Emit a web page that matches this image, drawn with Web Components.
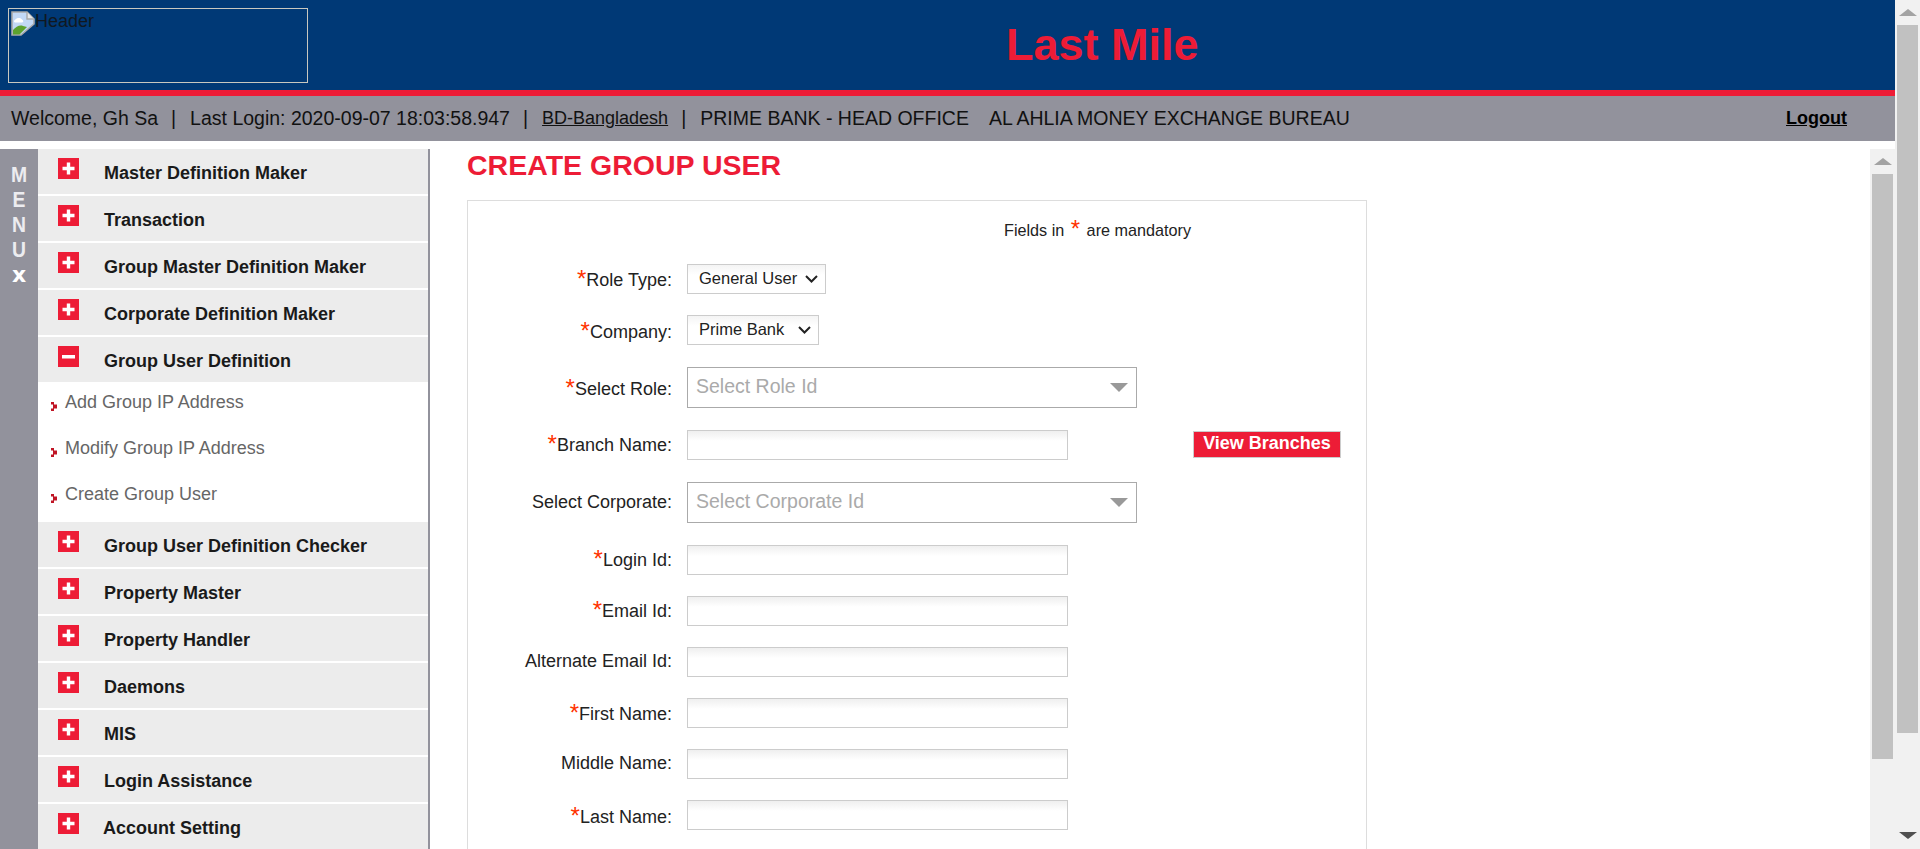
<!DOCTYPE html>
<html lang="en">
<head>
<meta charset="utf-8">
<title>Last Mile</title>
<style>
  html, body { margin: 0; height: 849px; overflow: hidden; background: #fff; }
  body { font-family: "Liberation Sans", Arial, sans-serif; color: #222; display: flex; }
</style>
</head>
<body>

<app-page>
  <app-header slot="header" title="Last Mile"></app-header>
  <status-bar slot="status"></status-bar>
  <side-menu slot="menu">
    <menu-item label="Master Definition Maker"></menu-item>
    <menu-item label="Transaction"></menu-item>
    <menu-item label="Group Master Definition Maker"></menu-item>
    <menu-item label="Corporate Definition Maker"></menu-item>
    <menu-item label="Group User Definition" open>
      <sub-item>Add Group IP Address</sub-item>
      <sub-item>Modify Group IP Address</sub-item>
      <sub-item>Create Group User</sub-item>
    </menu-item>
    <menu-item label="Group User Definition Checker"></menu-item>
    <menu-item label="Property Master"></menu-item>
    <menu-item label="Property Handler"></menu-item>
    <menu-item label="Daemons"></menu-item>
    <menu-item label="MIS"></menu-item>
    <menu-item label="Login Assistance"></menu-item>
    <menu-item label="Account Setting" tight></menu-item>
  </side-menu>
  <form-panel slot="main" heading="CREATE GROUP USER">
    <form-row label="Role Type:" required nudge="1"><native-select width="139" value="General User"></native-select></form-row>
    <form-row label="Company:" required nudge="2"><native-select width="132" value="Prime Bank"></native-select></form-row>
    <form-row label="Select Role:" required tall nudge="1"><combo-box placeholder="Select Role Id"></combo-box></form-row>
    <form-row label="Branch Name:" required><text-field></text-field><red-button>View Branches</red-button></form-row>
    <form-row label="Select Corporate:" tall nudge="-1"><combo-box placeholder="Select Corporate Id"></combo-box></form-row>
    <form-row label="Login Id:" required><text-field></text-field></form-row>
    <form-row label="Email Id:" required><text-field></text-field></form-row>
    <form-row label="Alternate Email Id:" nudge="-1"><text-field></text-field></form-row>
    <form-row label="First Name:" required nudge="1"><text-field></text-field></form-row>
    <form-row label="Middle Name:" nudge="-1"><text-field></text-field></form-row>
    <form-row label="Last Name:" required nudge="2"><text-field></text-field></form-row>
  </form-panel>
  <fake-scrollbar slot="inner" top="25" thumb="585"></fake-scrollbar>
</app-page>
<fake-scrollbar top="25" thumb="708" down></fake-scrollbar>

<script>
const RED = '#ed1c36';

// Outer page frame
class AppPage extends HTMLElement {
  constructor() {
    super();
    this.attachShadow({mode: 'open'}).innerHTML = `
    <style>
      :host { display: flex; flex-direction: column; flex: 1; min-width: 0; height: 849px; }
      .body { display: flex; flex: 1; min-height: 0; margin-top: 8px; }
      .main { flex: 1; min-width: 0; overflow: hidden; padding-left: 37px; }
    </style>
    <slot name="header"></slot>
    <slot name="status"></slot>
    <div class="body">
      <slot name="menu"></slot>
      <div class="main"><slot name="main"></slot></div>
      <slot name="inner"></slot>
    </div>`;
  }
}

class AppHeader extends HTMLElement {
  constructor() {
    super();
    this.attachShadow({mode: 'open'}).innerHTML = `
    <style>
      :host { display: flex; height: 90px; background: #003976; border-bottom: 6px solid ${RED}; box-sizing: content-box; }
      .logo { width: 298px; height: 73px; margin: 8px 0 0 8px; border: 1px solid #c8c8c0; display: flex; align-items: flex-start; color: #101820; font-size: 18px; line-height: 20px; flex: none; }
      .logo svg { margin: 2px 0 0 2px; flex: none; }
      .logo span { margin-top: 2px; }
      h1 { flex: 1; margin: 0; padding: 20px 0 0 698px; font-size: 45px; line-height: 50px; font-weight: bold; color: ${RED}; }
    </style>
    <div class="logo">
      <svg width="24" height="25" viewBox="0 0 24 25">
        <path d="M1 1h15l7 7v5L10 24H1z" fill="#c3d9f6" stroke="#a9a9a9" stroke-width="1.600"/>
        <path d="M16 1v7h7" fill="#e6e8ea" stroke="#a9a9a9" stroke-width="1.400"/>
        <path d="M4 9c2-2.500 5-2.500 7-.500 1.500 1 2 2.500 0 3H4c-1.500-.500-1.500-1.800 0-2.500z" fill="#fff"/>
        <path d="M2 23.500V19c3-3.500 7-5.500 10-4l4 1-7.500 7.500z" fill="#5da32f"/>
      </svg>
      <span>Header</span>
    </div>
    <h1>${this.getAttribute('title')}</h1>`;
  }
}

class StatusBar extends HTMLElement {
  constructor() {
    super();
    this.attachShadow({mode: 'open'}).innerHTML = `
    <style>
      :host { display: flex; align-items: center; height: 45px; background: #92929c; color: #111; font-size: 19.500px; padding-left: 11px; padding-right: 48px; white-space: nowrap; }
      .sep { margin: 0 14px 0 13px; }
      .gap { margin-left: 20px; }
      a { color: inherit; font-size: 18px; }
      .logout { margin-left: auto; font-weight: bold; font-size: 18px; color: #000; }
    </style>
    <span>Welcome, Gh Sa</span><span class="sep">|</span>
    <span>Last Login: 2020-09-07 18:03:58.947</span><span class="sep">|</span>
    <a href="#">BD-Bangladesh</a><span class="sep">|</span>
    <span>PRIME BANK - HEAD OFFICE</span>
    <span class="gap">AL AHLIA MONEY EXCHANGE BUREAU</span>
    <a class="logout" href="#">Logout</a>`;
  }
}

class SideMenu extends HTMLElement {
  constructor() {
    super();
    this.attachShadow({mode: 'open'}).innerHTML = `
    <style>
      :host { display: flex; width: 430px; flex: none; }
      .strip { width: 38px; background: #92929c; color: #ececf0; font-weight: bold; font-size: 22px; text-align: center; line-height: 25px; padding-top: 13px; box-sizing: border-box; flex: none; }
      .strip b { display: block; transform: scaleX(.88); }
      .strip .x { font-size: 22px; color: #fff; font-family: "DejaVu Sans", sans-serif; transform: none; }
      .items { flex: 1; border-right: 2px solid #92929c; overflow: hidden; }
    </style>
    <div class="strip"><b>M</b><b>E</b><b>N</b><b>U</b><b class="x">x</b></div>
    <div class="items"><slot></slot></div>`;
  }
}

class MenuItem extends HTMLElement {
  constructor() {
    super();
    const open = this.hasAttribute('open');
    const bar = open ? '<rect x="4" y="9" width="13" height="3.500" fill="#fff"/>'
                     : '<path d="M8.800 4.500h3.400v4.300h4.300v3.400h-4.300v4.300H8.800v-4.300H4.500V8.800h4.300z" fill="#fff"/>';
    this.attachShadow({mode: 'open'}).innerHTML = `
    <style>
      :host { display: block; margin-bottom: 2px; }
      :host([open]) { margin-bottom: 0; }
      .head { display: flex; height: 45px; background: #ececec; color: #1a1a1a; font-weight: bold; font-size: 18px; line-height: 48px; padding-left: 20px; }
      svg { flex: none; margin: 9px 25px 0 0; }
      :host([tight]) svg { margin-right: 24px; }
    </style>
    <div class="head">
      <svg width="21" height="21" viewBox="0 0 21 21"><rect width="21" height="21" fill="${RED}"/>${bar}</svg>
      <span>${this.getAttribute('label')}</span>
    </div>
    <slot></slot>`;
  }
}

class SubItem extends HTMLElement {
  constructor() {
    super();
    this.attachShadow({mode: 'open'}).innerHTML = `
    <style>
      :host { display: flex; height: 46px; background: #fff; color: #666; font-size: 18px; line-height: 40px; padding-left: 13px; }
      :host(:last-child) { height: 48px; }
      svg { flex: none; margin: 20px 8px 0 0; }
    </style>
    <svg width="6" height="9" viewBox="0 0 6 9"><path d="M0 0h3v2.500h3v4H3V9H0V6.500h2v-4H0z" fill="#c01525"/></svg>
    <span><slot></slot></span>`;
  }
}

class FormPanel extends HTMLElement {
  constructor() {
    super();
    this.attachShadow({mode: 'open'}).innerHTML = `
    <style>
      :host { display: block; width: 900px; }
      h2 { margin: 0; height: 51px; font-size: 28.500px; line-height: 33px; font-weight: bold; color: ${RED}; }
      .panel { border: 1px solid #ddd; padding-bottom: 40px; box-sizing: border-box; }
      .note { height: 63px; padding: 19px 0 0 536px; box-sizing: border-box; font-size: 16.200px; line-height: 20px; color: #222; }
      .note i { font-style: normal; color: #ff3300; font-size: 24px; line-height: 16px; vertical-align: -1px; margin: 0 2px; }
    </style>
    <h2>${this.getAttribute('heading')}</h2>
    <div class="panel">
      <div class="note">Fields in <i>*</i> are mandatory</div>
      <slot></slot>
    </div>`;
  }
}

class FormRow extends HTMLElement {
  constructor() {
    super();
    const star = this.hasAttribute('required') ? '<i>*</i>' : '';
    const nudge = Number(this.getAttribute('nudge') || 0);
    this.attachShadow({mode: 'open'}).innerHTML = `
    <style>
      :host { display: flex; align-items: center; margin-bottom: 21px; height: 30px; }
      :host([tall]) { height: 41px; margin-top: 22px; margin-bottom: 22px; }
      label { width: 204px; text-align: right; font-size: 18px; line-height: 20px; color: #222; margin-right: 15px; flex: none; white-space: nowrap; position: relative; top: ${nudge}px; }
      i { font-style: normal; color: #ff3300; font-size: 24px; line-height: 16px; vertical-align: -1px; }
    </style>
    <label>${star}${this.getAttribute('label')}</label>
    <slot></slot>`;
  }
}

class TextField extends HTMLElement {
  constructor() {
    super();
    this.attachShadow({mode: 'open'}).innerHTML = `
    <style>
      :host { display: block; flex: none; }
      input { display: block; width: 381px; height: 30px; box-sizing: border-box; border: 1px solid #ccc; border-radius: 0; padding: 0 6px; margin: 0; outline: 0; background: linear-gradient(#efefef, #fff 10px); }
    </style>
    <input type="text">`;
  }
}

class NativeSelect extends HTMLElement {
  constructor() {
    super();
    const value = this.getAttribute('value');
    this.attachShadow({mode: 'open'}).innerHTML = `
    <style>
      :host { display: flex; align-items: center; flex: none; }
      select { display: block; appearance: none; width: ${this.getAttribute('width')}px; height: 30px; box-sizing: border-box; border: 1px solid #ccc; border-radius: 0; padding: 0 0 2px 11px; margin: 0; background: linear-gradient(#f4f4f4, #fff 10px); color: #222; font: 16.500px "Liberation Sans", Arial, sans-serif; outline: 0; }
      svg { flex: none; margin-left: -21px; margin-right: 8px; pointer-events: none; margin-top: -1px; }
    </style>
    <select><option>${value}</option></select>
    <svg width="13" height="8" viewBox="0 0 13 8"><path d="M1 1l5.500 5.500L12 1" fill="none" stroke="#222" stroke-width="2"/></svg>`;
  }
}

class ComboBox extends HTMLElement {
  constructor() {
    super();
    this.attachShadow({mode: 'open'}).innerHTML = `
    <style>
      :host { display: flex; flex: none; align-items: center; width: 450px; height: 41px; box-sizing: border-box; border: 1px solid #aaa; background: #fff; padding: 0 8px 0 8px; color: #aaa; font-size: 19.500px; }
      span { flex: 1; padding-bottom: 2px; }
      svg { flex: none; }
    </style>
    <span>${this.getAttribute('placeholder')}</span>
    <svg width="18" height="9" viewBox="0 0 18 9"><path d="M0 0h18L9 9z" fill="#999"/></svg>`;
  }
}

class RedButton extends HTMLElement {
  constructor() {
    super();
    this.attachShadow({mode: 'open'}).innerHTML = `
    <style>
      :host { display: block; flex: none; margin-left: 125px; margin-top: -2px; height: 26px; }
      button { display: block; width: 148px; height: 27px; box-sizing: border-box; border: 1px solid #ccc; padding: 0 0 2px; margin: 0; background: ${RED}; color: #fff; font: bold 18px/23px "Liberation Sans", Arial, sans-serif; }
    </style>
    <button><slot></slot></button>`;
  }
}

class FakeScrollbar extends HTMLElement {
  constructor() {
    super();
    const down = this.hasAttribute('down')
      ? '<svg class="down" width="18" height="7" viewBox="0 0 18 7"><path d="M0 0h18L9 7z" fill="#505050"/></svg>' : '';
    this.attachShadow({mode: 'open'}).innerHTML = `
    <style>
      :host { display: flex; flex-direction: column; align-items: center; flex: none; width: 25px; box-sizing: border-box; background: #f1f1f1; }
      .up { height: ${this.getAttribute('top')}px; display: flex; align-items: center; justify-content: center; }
      .thumb { width: 21px; height: ${this.getAttribute('thumb')}px; background: #c1c1c1; flex: none; }
      .down { margin-top: auto; margin-bottom: 10px; }
    </style>
    <div class="up"><svg width="18" height="7" viewBox="0 0 18 7"><path d="M9 0l9 7H0z" fill="#a3a3a3"/></svg></div>
    <div class="thumb"></div>
    ${down}`;
  }
}

customElements.define('app-page', AppPage);
customElements.define('app-header', AppHeader);
customElements.define('status-bar', StatusBar);
customElements.define('side-menu', SideMenu);
customElements.define('menu-item', MenuItem);
customElements.define('sub-item', SubItem);
customElements.define('form-panel', FormPanel);
customElements.define('form-row', FormRow);
customElements.define('text-field', TextField);
customElements.define('native-select', NativeSelect);
customElements.define('combo-box', ComboBox);
customElements.define('red-button', RedButton);
customElements.define('fake-scrollbar', FakeScrollbar);
</script>
</body>
</html>
